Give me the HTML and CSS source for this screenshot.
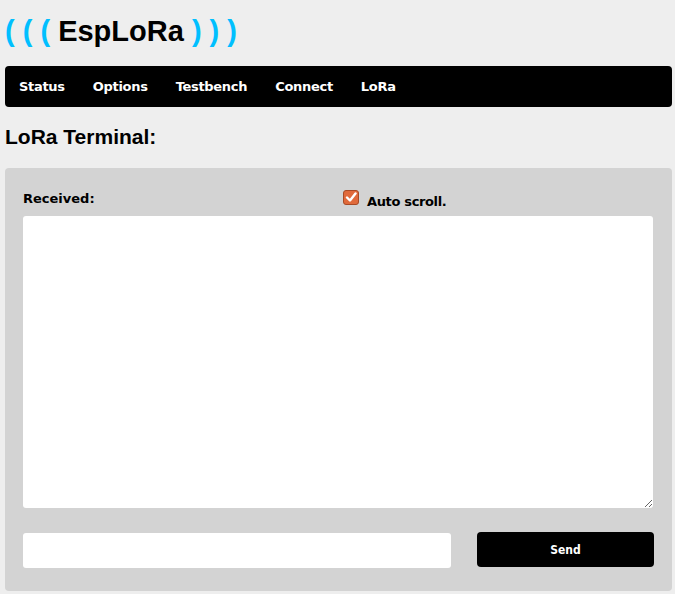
FILE: index.html
```html
<!DOCTYPE html>
<html>
<head>
<meta charset="utf-8">
<link rel="stylesheet" href="styles.css">
</head>
<body>
<header class="brand">
  <h1 class="logo"><span class="waves">( ( (</span> EspLoRa <span class="waves">) ) )</span></h1>
</header>
<nav class="menu">
  <a class="menu-item" href="#">Status</a>
  <a class="menu-item" href="#">Options</a>
  <a class="menu-item" href="#">Testbench</a>
  <a class="menu-item" href="#">Connect</a>
  <a class="menu-item" href="#">LoRa</a>
</nav>
<h2 class="page-title">LoRa Terminal:</h2>
<section class="panel">
  <div class="panel-head">
    <span class="label">Received:</span>
    <label class="autoscroll">
      <span class="check"><svg width="12" height="11" viewBox="0 0 12 11"><path d="M2 5.5 L5 8.5 L10.5 1.5" fill="none" stroke="#fff" stroke-width="2.4" stroke-linecap="round" stroke-linejoin="round"/></svg></span>
      <span class="label auto-label">Auto scroll.</span>
    </label>
  </div>
  <textarea class="terminal"></textarea>
  <div class="send-row">
    <input class="send-input" type="text">
    <button class="send-btn">Send</button>
  </div>
</section>
</body>
</html>
```
FILE: styles.css
```css
html, body {
  margin: 0;
  padding: 0;
  background: #eeeeee;
}
body {
  padding: 0 3px 0 5px;
  font-family: "DejaVu Sans", sans-serif;
}
.brand {
  height: 66px;
}
.logo {
  margin: 0;
  padding-top: 14px;
  font-family: "Liberation Sans", Arial, sans-serif;
  font-size: 29px;
  font-weight: bold;
  line-height: 34px;
  color: #000;
}
.waves {
  color: #00bfff;
}
.menu {
  display: flex;
  align-items: center;
  height: 41px;
  background: #000;
  border-radius: 4px;
  padding-left: 14px;
  gap: 28px;
}
.menu-item {
  color: #fff;
  text-decoration: none;
  font-weight: bold;
  font-size: 13px;
  letter-spacing: -0.3px;
}
.page-title {
  margin: 0;
  height: 61px;
  padding-top: 18px;
  box-sizing: border-box;
  font-family: "Liberation Sans", Arial, sans-serif;
  font-size: 21px;
  font-weight: bold;
  line-height: 24px;
}
.panel {
  background: #d3d3d3;
  border-radius: 4px;
  padding: 20px 18px 23px 18px;
  height: 423px;
  box-sizing: border-box;
}
.panel-head {
  display: flex;
  align-items: flex-start;
  height: 28px;
}
.label {
  font-weight: bold;
  font-size: 13px;
  color: #000;
}
.panel-head > .label {
  width: 320px;
  padding-top: 3px;
}
.autoscroll {
  display: flex;
  align-items: flex-start;
  gap: 8px;
  margin-top: 2px;
}
.check {
  width: 14px;
  height: 13px;
  background: #e06a3b;
  border: 1px solid #a84a25;
  border-radius: 3px;
  display: flex;
  align-items: center;
  justify-content: center;
}
.auto-label {
  padding-top: 4px;
  letter-spacing: -0.35px;
}
.terminal {
  display: block;
  width: 630px;
  height: 292px;
  box-sizing: border-box;
  border: none;
  border-radius: 3px;
  background: #fff;
  margin: 0;
  resize: vertical;
}
.send-row {
  display: flex;
  justify-content: space-between;
  align-items: flex-start;
  margin-top: 24px;
  width: 631px;
}
.send-input {
  width: 428px;
  height: 35px;
  margin-top: 1px;
  box-sizing: border-box;
  border: none;
  border-radius: 3px;
  background: #fff;
}
.send-btn {
  width: 177px;
  height: 35px;
  box-sizing: border-box;
  border: none;
  border-radius: 4px;
  background: #000;
  color: #fff;
  font-family: "DejaVu Sans Condensed", "DejaVu Sans", sans-serif;
  font-weight: bold;
  font-size: 12px;
}
```
